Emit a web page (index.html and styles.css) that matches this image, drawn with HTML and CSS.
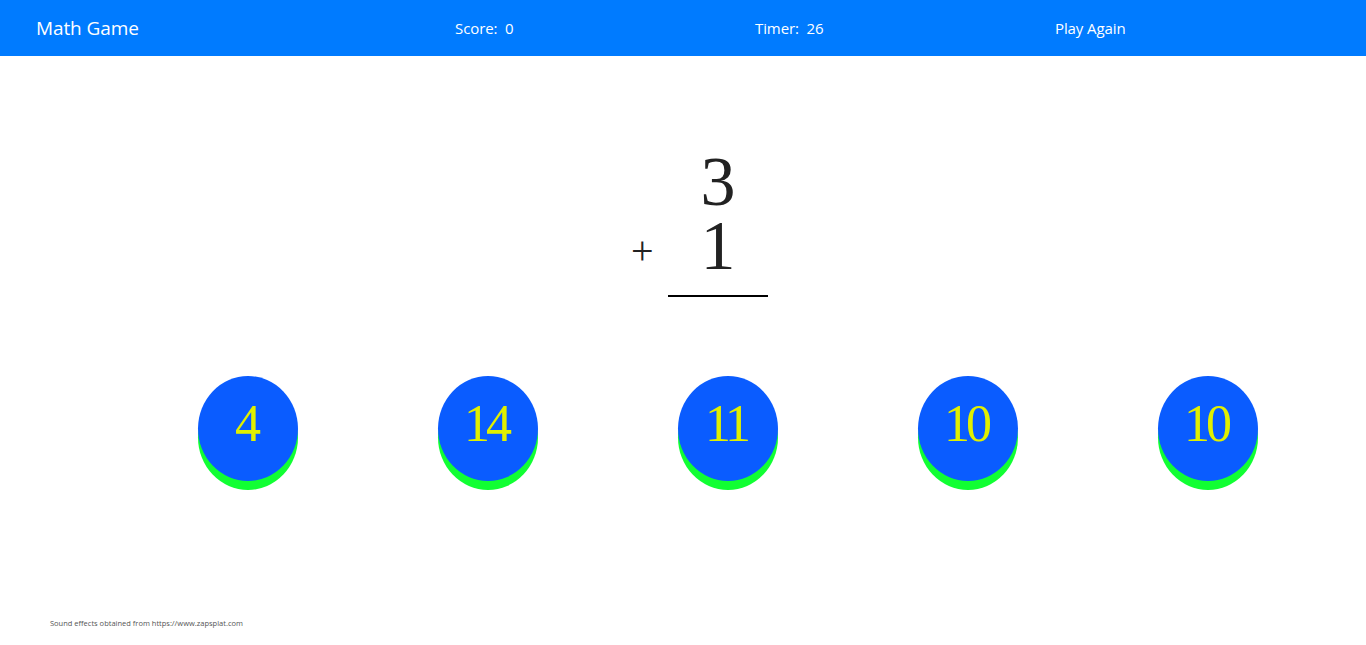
FILE: index.html
```html
<!DOCTYPE html>
<html>
<head>
<meta charset="utf-8">
<link rel="stylesheet" href="styles.css">
</head>
<body>
<nav class="navbar">
  <div class="brand">Math Game</div>
  <div class="nav-item">Score:&nbsp; 0</div>
  <div class="nav-item">Timer:&nbsp; 26</div>
  <div class="nav-item">Play Again</div>
</nav>
<main class="main">
  <div class="problem">
    <div class="op-col">
      <div class="row"></div>
      <div class="row plus">+</div>
    </div>
    <div class="num-col">
      <div class="row">3</div>
      <div class="row">1</div>
      <div class="rule"></div>
    </div>
  </div>
  <div class="answers">
    <div class="cell"><button class="ans">4</button></div>
    <div class="cell"><button class="ans">14</button></div>
    <div class="cell"><button class="ans">11</button></div>
    <div class="cell"><button class="ans">10</button></div>
    <div class="cell"><button class="ans">10</button></div>
  </div>
</main>
<footer class="footer">Sound effects obtained from https://www.zapsplat.com</footer>
</body>
</html>
```
FILE: styles.css
```css
html, body {
  margin: 0;
  padding: 0;
  background: #fff;
}
body {
  font-family: "Open Sans", "Noto Sans", sans-serif;
  height: 645px;
  overflow: hidden;
}
.navbar {
  height: 56px;
  background: #007bff;
  color: #fff;
  display: flex;
  align-items: center;
  padding-left: 36px;
}
.brand {
  font-size: 19px;
  width: 419px;
  letter-spacing: -0.1px;
}
.nav-item {
  font-size: 15px;
  width: 300px;
  letter-spacing: -0.1px;
}
.main {
  padding-top: 94px;
}
.problem {
  display: flex;
  justify-content: center;
  padding-left: 34px;
  font-family: "Liberation Serif", serif;
  color: #222;
}
.op-col {
  width: 36px;
}
.num-col {
  width: 100px;
  display: flex;
  flex-direction: column;
  align-items: center;
}
.row {
  height: 64px;
  line-height: 64px;
  font-size: 70px;
}
.plus {
  font-size: 40px;
  color: #222;
  padding-top: 5px;
  box-sizing: border-box;
  margin-left: -1px;
}
.rule {
  width: 100px;
  height: 2px;
  background: #000;
  margin-top: 17px;
}
.answers {
  display: flex;
  padding-left: 128px;
  margin-top: 79px;
}
.cell {
  width: 240px;
  display: flex;
  justify-content: center;
}
.ans {
  width: 100px;
  height: 105px;
  border: none;
  border-radius: 50%;
  background: #0a5cff;
  box-shadow: 0 9px 0 #11ff33;
  color: #e0f000;
  font-family: "Liberation Serif", serif;
  font-size: 52px;
  letter-spacing: -4px;
  text-indent: -4px;
  padding: 0 0 10px 0;
  cursor: pointer;
}
.footer {
  margin-top: 137px;
  padding-left: 50px;
  font-size: 7.5px;
  color: #555;
}
```
